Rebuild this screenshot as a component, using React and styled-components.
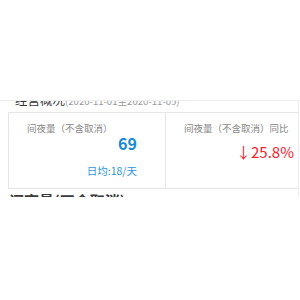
import React from "react";
import styled, { createGlobalStyle } from "styled-components";

const Global = createGlobalStyle`
  html, body { margin: 0; padding: 0; background: #fff; }
  body { font-family: "Noto Sans CJK SC", "Noto Sans", sans-serif; }
`;

const Page = styled.div`
  width: 300px;
  height: 300px;
  padding-top: 100px;
  box-sizing: border-box;
  overflow: hidden;
`;

const Panel = styled.section`
  width: 299px;
  height: 97px;
  box-sizing: border-box;
  border-top: 1px solid #ededed;
  border-right: 1px solid #ededed;
  overflow: hidden;
`;

const Scroller = styled.div`
  margin-top: -12px;
  display: flex;
  flex-direction: column;
`;

const Header = styled.div`
  height: 22px;
  line-height: 22px;
  padding-left: 15px;
  font-size: 12.5px;
  color: #333;
  white-space: nowrap;
  margin-bottom: 1px;
`;

const HeaderDate = styled.span`
  font-size: 9.6px;
  color: #999;
`;

const Grid = styled.div`
  margin-left: 8px;
  display: grid;
  grid-template-columns: 157px 157px;
  width: 316px;
  border: 1px solid #e6e6e6;
  box-sizing: border-box;
`;

const Cell = styled.div`
  padding: 8px 0 10px 18px;
  border-right: 1px solid #e6e6e6;
  box-sizing: border-box;
`;

const Body = styled.div`
  width: 110px;
  display: flex;
  flex-direction: column;
`;

const Label = styled.div`
  font-size: 9.5px;
  line-height: 14px;
  color: #888;
  white-space: nowrap;
`;

const Value = styled.div`
  text-align: right;
  white-space: nowrap;
  color: ${(p) => (p.$tone === "down" ? "#f5222d" : "#1a8ad6")};
  font-size: ${(p) => (p.$tone === "down" ? "15px" : "16px")};
  font-weight: ${(p) => (p.$tone === "down" ? 400 : 700)};
  line-height: ${(p) => (p.$tone === "down" ? "20px" : "18px")};
  margin-top: ${(p) => (p.$tone === "down" ? "7px" : "-1px")};
`;

const Avg = styled.div`
  text-align: right;
  font-size: 10.5px;
  line-height: 14px;
  color: #2f95dc;
  margin-top: 12px;
  white-space: nowrap;
`;

const SectionTitle = styled.div`
  margin: 2px 0 0 9px;
  font-size: 15px;
  font-weight: 700;
  line-height: 20px;
  color: #3a3a3a;
  white-space: nowrap;
`;

export default function App() {
  return (
    <Page>
      <Global />
      <Panel>
        <Scroller>
          <Header>
            经营概况<HeaderDate>(2020-11-01至2020-11-05)</HeaderDate>
          </Header>
          <Grid>
            <Cell>
              <Body>
                <Label>间夜量（不含取消）</Label>
                <Value>69</Value>
                <Avg>日均:18/天</Avg>
              </Body>
            </Cell>
            <Cell>
              <Body>
                <Label>间夜量（不含取消）同比</Label>
                <Value $tone="down">↓25.8%</Value>
              </Body>
            </Cell>
          </Grid>
          <SectionTitle>间夜量(不含取消)</SectionTitle>
        </Scroller>
      </Panel>
    </Page>
  );
}
